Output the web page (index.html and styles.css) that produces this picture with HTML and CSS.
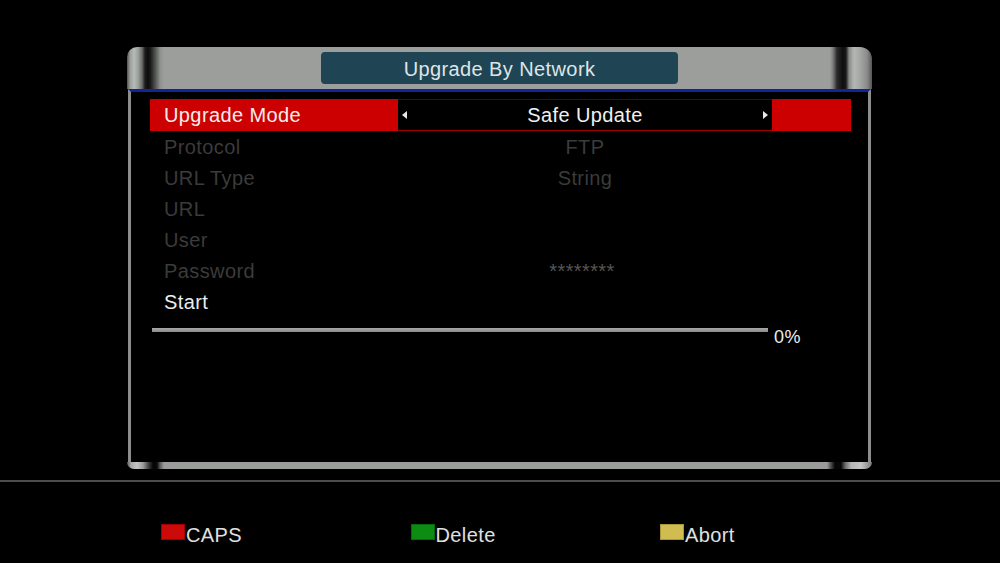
FILE: index.html
```html
<!DOCTYPE html>
<html>
<head>
<meta charset="utf-8">
<link rel="stylesheet" href="styles.css">
</head>
<body>
<div class="screen">
  <div class="panel">
    <div class="panel-head">
      <div class="title">Upgrade By Network</div>
    </div>
    <div class="panel-body">
      <div class="menu">
        <div class="row row-active">
          <div class="label">Upgrade Mode</div>
          <div class="value"><span class="arrow arrow-left"></span><span class="value-text">Safe Update</span><span class="arrow arrow-right"></span></div>
          <div class="tail"></div>
        </div>
        <div class="row row-disabled">
          <div class="label">Protocol</div>
          <div class="value"><span class="value-text">FTP</span></div>
          <div class="tail"></div>
        </div>
        <div class="row row-disabled">
          <div class="label">URL Type</div>
          <div class="value"><span class="value-text">String</span></div>
          <div class="tail"></div>
        </div>
        <div class="row row-disabled">
          <div class="label">URL</div>
          <div class="value"><span class="value-text"></span></div>
          <div class="tail"></div>
        </div>
        <div class="row row-disabled">
          <div class="label">User</div>
          <div class="value"><span class="value-text"></span></div>
          <div class="tail"></div>
        </div>
        <div class="row row-disabled">
          <div class="label">Password</div>
          <div class="value"><span class="value-text secret">********</span></div>
          <div class="tail"></div>
        </div>
        <div class="row row-normal">
          <div class="label">Start</div>
          <div class="value"><span class="value-text"></span></div>
          <div class="tail"></div>
        </div>
      </div>
      <div class="progress">
        <div class="progress-track"></div>
        <div class="progress-text">0%</div>
      </div>
    </div>
    <div class="panel-foot"></div>
  </div>
  <div class="divider"></div>
  <div class="keys">
    <div class="key"><span class="swatch swatch-red"></span><span class="key-label">CAPS</span></div>
    <div class="key"><span class="swatch swatch-green"></span><span class="key-label">Delete</span></div>
    <div class="key"><span class="swatch swatch-yellow"></span><span class="key-label">Abort</span></div>
  </div>
</div>
</body>
</html>
```

FILE: styles.css
```css
html, body {
  margin: 0;
  padding: 0;
  background: #000;
}

.screen {
  width: 1000px;
  height: 563px;
  overflow: hidden;
  background: #000;
  font-family: "Liberation Sans", Arial, sans-serif;
  font-size: 20px;
  letter-spacing: 0.4px;
  color: #e8e8e8;
  padding-top: 47px;
  box-sizing: border-box;
}

.panel {
  width: 745px;
  margin-left: 127px;
}

.panel-head {
  height: 42px;
  border-radius: 10px 12px 0 0;
  display: flex;
  align-items: center;
  justify-content: center;
  background: linear-gradient(to right,
    #505250 0px, #9a9e9a 3px, #b8bcb8 7px, #9ea29e 11px, #6a6c6a 15px,
    #1c1c1c 18px, #0c0c0c 21px, #202020 24px, #5a5c5a 29px, #8e908e 33px,
    #9c9e9c 37px, #9c9e9c 703px, #7a7c7a 706px, #2a2a2a 710px,
    #0e0e0e 716px, #1a1a1a 719px, #888a88 722px, #b4b8b4 727px,
    #a4a8a4 733px, #8a8c8a 740px, #555 745px);
}

.title {
  width: 357px;
  height: 32px;
  border-radius: 4px;
  background: #1f4554;
  color: #dfe4e6;
  text-align: center;
  line-height: 34px;
}

.panel-body {
  height: 370px;
  margin: 0 1px;
  border-top: 3px solid #13239c;
  border-left: 3px solid #8c8e8c;
  border-right: 3px solid #8c8e8c;
  background: #000;
}

.menu {
  padding: 7px 17px 0 19px;
}

.row {
  display: grid;
  grid-template-columns: 248px 374px 79px;
  height: 31px;
  line-height: 34px;
}

.row-active {
  line-height: 32px;
}

.label {
  padding-left: 14px;
  white-space: nowrap;
}

.value {
  display: flex;
  align-items: flex-start;
  justify-content: center;
  position: relative;
}

.value-text {
  white-space: nowrap;
}

.row-active .label {
  background: #cc0000;
  color: #f4ecec;
}

.row-active .value {
  background: #000;
  box-sizing: border-box;
  border-top: 1px solid #5a0000;
  border-bottom: 1px solid #a00000;
  line-height: 30px;
  color: #f0f0f0;
}

.row-active .tail {
  background: #cc0000;
}

.arrow {
  position: absolute;
  top: 50%;
  width: 0;
  height: 0;
  margin-top: -4px;
  border-top: 4px solid transparent;
  border-bottom: 4px solid transparent;
}

.arrow-left {
  left: 4px;
  border-right: 5px solid #e8e8e8;
}

.arrow-right {
  right: 4px;
  border-left: 5px solid #e8e8e8;
}

.row-disabled {
  color: #3b3b3b;
}

.secret {
  color: #555;
  margin-left: -6px;
}

.row-normal {
  color: #ececec;
}

.progress {
  display: flex;
  align-items: flex-start;
  margin-top: 11px;
  padding-left: 21px;
}

.progress-track {
  width: 616px;
  height: 4px;
  margin-top: 1px;
  background: linear-gradient(to bottom, #a8a8a8, #8a8a8a);
}

.progress-text {
  margin-left: 6px;
  font-size: 18px;
  line-height: 20px;
  color: #ececec;
}

.panel-foot {
  height: 7px;
  border-radius: 0 0 9px 9px;
  background: linear-gradient(to right,
    #5a5a5a 0px, #a8aaa8 4px, #c4c6c4 10px, #9a9c9a 16px, #3a3a3a 22px,
    #050505 26px, #080808 30px, #5a5a5a 33px, #9a9c9a 37px,
    #9a9c9a 700px, #4a4a4a 704px, #050505 708px, #080808 714px,
    #666 718px, #b4b6b4 724px, #c4c6c4 734px, #7a7a7a 745px);
}

.divider {
  height: 2px;
  margin-top: 11px;
  background: #4c4c4c;
}

.keys {
  display: flex;
  padding: 41px 0 0 161px;
}

.key {
  width: 249.5px;
  display: flex;
  align-items: flex-start;
  line-height: 24px;
}

.swatch {
  width: 24px;
  height: 16px;
  margin-top: 1px;
  margin-right: 1px;
  box-sizing: border-box;
}

.swatch-red {
  background: #cc0a0a;
  border: 1px solid #a00000;
}

.swatch-green {
  background: #0c8c12;
  border: 1px solid #066a0a;
}

.swatch-yellow {
  background: #d0bc50;
  border: 1px solid #a89838;
}

.key-label {
  color: #e0e0e0;
}
```
